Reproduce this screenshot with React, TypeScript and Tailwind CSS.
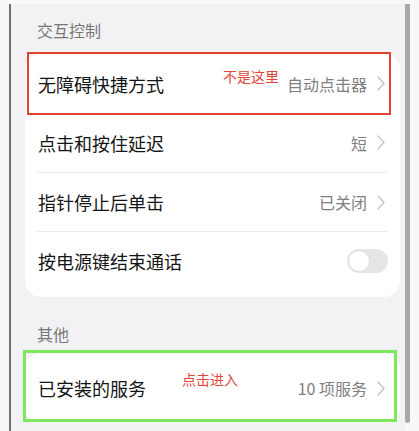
import React from "react";

const FONT = { fontFamily: '"Noto Sans CJK SC", "Noto Sans", sans-serif' };

function Chevron() {
  return (
    <svg width="8" height="15" viewBox="0 0 8 15" className="ml-[10px] shrink-0">
      <polyline points="1,1 7,7.5 1,14" fill="none" stroke="#c4c4c4" strokeWidth="1.4" strokeLinecap="round" strokeLinejoin="round" />
    </svg>
  );
}

function Row({ label, value, divider, children }: { label: string; value?: string; divider?: boolean; children?: React.ReactNode }) {
  return (
    <div className={`mx-[12px] h-[59px] flex items-center ${divider ? "border-t border-[#ececec]" : ""}`}>
      <span className="pl-[1px] text-[18px] text-[#141414] leading-none">{label}</span>
      <div className="ml-auto flex items-center">
        {value !== undefined ? (
          <>
            <span className="text-[16px] text-[#808080] leading-none">{value}</span>
            <div className="pr-[3px]">
              <Chevron />
            </div>
          </>
        ) : (
          children
        )}
      </div>
    </div>
  );
}

function Toggle() {
  return (
    <div className="w-[41px] h-[24px] rounded-full bg-[#e6e6e6] flex items-center px-[1px]">
      <div className="w-[22px] h-[22px] rounded-full bg-white border border-[#dedede]" />
    </div>
  );
}

export default function App() {
  return (
    <div className="w-[419px] h-[431px] bg-[#f8f8f8] pt-[4px] flex overflow-hidden" style={FONT}>
      <div className="w-[9px]" />
      <div className="w-[2px] bg-[#6e6e6e]" />
      <div className="flex-1 bg-[#f2f2f4] pl-[14px] pr-[5px]">
        <div className="pt-[14px] h-[38px] mb-[12px] flex items-center pl-[12px]">
          <span className="text-[16px] text-[#777777] leading-none">交互控制</span>
        </div>
        <div className="relative bg-white rounded-[16px] pb-[7px]">
          <Row label="无障碍快捷方式" value="自动点击器" />
          <Row label="点击和按住延迟" value="短" />
          <Row label="指针停止后单击" value="已关闭" divider />
          <Row label="按电源键结束通话" divider>
            <Toggle />
          </Row>
          <div className="absolute left-[2px] right-[9px] top-[-2px] h-[63px] border-2 border-[#e2432f]" />
          <span className="absolute left-[198px] top-[12px] text-[14px] leading-[20px] text-[#e0463a]">不是这里</span>
        </div>
        <div className="pt-[25px] h-[49px] mb-[7px] flex items-center pl-[12px]">
          <span className="text-[16px] text-[#777777] leading-none">其他</span>
        </div>
        <div className="relative bg-white rounded-[16px]">
          <div className="mx-[12px] h-[70px] flex items-center">
            <span className="pl-[1px] text-[18px] text-[#141414] leading-none">已安装的服务</span>
            <div className="ml-auto flex items-center">
              <span className="text-[16px] text-[#808080] leading-none">10 项服务</span>
              <div className="pr-[3px]">
                <Chevron />
              </div>
            </div>
          </div>
          <div className="absolute left-[-2px] right-[3px] top-[-3px] bottom-[1px] border-[3px] border-[#7ee85b]" />
          <span className="absolute left-[157px] top-[16px] text-[14px] leading-[20px] text-[#e0463a]">点击进入</span>
        </div>
      </div>
      <div className="w-[5px] bg-[#a8a8a8] rounded-b-full mb-[8px]" />
      <div className="w-[9px]" />
    </div>
  );
}
